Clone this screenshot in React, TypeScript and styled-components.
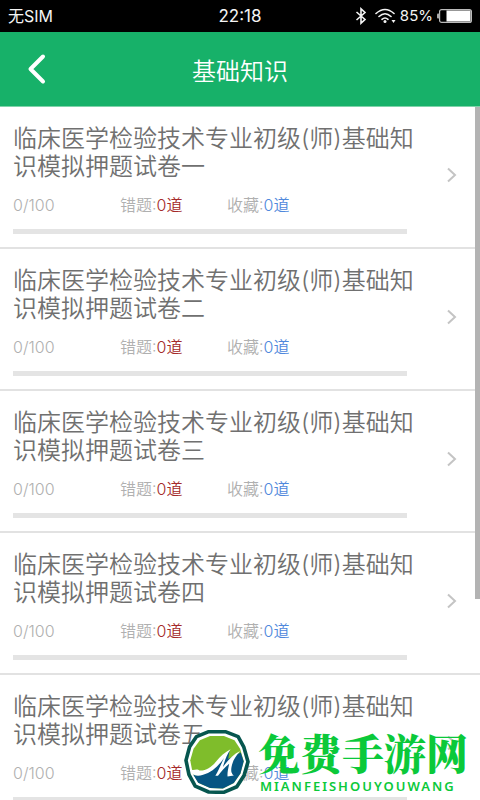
import React from "react";
import styled, { createGlobalStyle } from "styled-components";

const GlobalStyle = createGlobalStyle`
  * { box-sizing: border-box; }
  body {
    margin: 0;
    background: #fff;
    font-family: Inter, "Noto Sans CJK SC", sans-serif;
  }
`;

const Screen = styled.div`
  position: relative;
  display: flex;
  flex-direction: column;
  height: 100vh;
  overflow: hidden;
`;

const StatusBar = styled.div`
  display: grid;
  grid-template-columns: 1fr auto 1fr;
  align-items: center;
  flex: none;
  height: 32px;
  padding: 0 8px;
  background: #000;
  color: #f4f4f4;
  font-size: 16px;
  line-height: 32px;
`;

const Clock = styled.time`
  font-size: 17px;
`;

const StatusIcons = styled.div`
  display: flex;
  align-items: center;
  justify-content: flex-end;
`;

const BatteryLevel = styled.span`
  margin: 0 4px;
  font-size: 15px;
`;

const WifiIcon = styled.svg`
  margin-left: 8px;
`;

const Header = styled.header`
  display: grid;
  grid-template-columns: 74px 1fr 74px;
  align-items: center;
  flex: none;
  height: 75px;
  background: #17b169;
  border-bottom: 1px solid #7fd3aa;
`;

const BackButton = styled.button`
  display: flex;
  justify-content: center;
  padding: 0;
  border: 0;
  background: none;
  cursor: pointer;
`;

const PageTitle = styled.h1`
  margin: 0;
  padding-top: 6px;
  color: #fff;
  font-size: 24px;
  font-weight: 350;
  line-height: 32px;
  text-align: center;
`;

const ListArea = styled.main`
  position: relative;
  flex: 1;
  min-height: 0;
  overflow: hidden;
`;

const PaperList = styled.ul`
  margin: 0;
  padding: 0;
  list-style: none;
`;

const PaperLink = styled.a`
  display: flex;
  align-items: flex-start;
  justify-content: space-between;
  height: 142px;
  padding: 18px 22px 0 13px;
  border-bottom: 2px solid #e2e2e2;
  color: inherit;
  text-decoration: none;
`;

const PaperBody = styled.div`
  flex: 0 1 404px;
  min-width: 0;
`;

const PaperTitle = styled.h2`
  margin: 0;
  color: #707070;
  font-size: 24px;
  font-weight: 350;
  line-height: 28px;
`;

const Stats = styled.div`
  display: grid;
  grid-template-columns: 107px 107px 1fr;
  margin-top: 12px;
  color: #b0b0b0;
  font-size: 16px;
  font-weight: 350;
  line-height: 24px;
`;

const Count = styled.span<{ $color: string }>`
  color: ${(p) => p.$color};
`;

const Progress = styled.div`
  height: 5px;
  margin: 12px 10px 0 0;
  background: #e4e4e4;
`;

const Chevron = styled.svg`
  flex: none;
  margin-top: 42px;
`;

const ScrollThumb = styled.div`
  position: absolute;
  top: 0;
  right: 0;
  width: 5px;
  height: 71%;
  background: #b3b3b3;
`;

const Watermark = styled.div`
  position: absolute;
  right: 12px;
  bottom: 6px;
  display: flex;
  align-items: center;
  gap: 8px;
`;

const Brand = styled.div`
  display: flex;
  flex-direction: column;
  gap: 4px;
`;

const BrandName = styled.strong`
  color: #0bc93a;
  font-family: "Noto Serif CJK SC", "Noto Sans CJK SC", serif;
  font-size: 42px;
  font-weight: 900;
  line-height: 44px;
`;

const BrandLatin = styled.span`
  padding-left: 2px;
  color: #0bc93a;
  font-family: "Noto Sans", sans-serif;
  font-size: 13px;
  font-weight: 600;
  letter-spacing: 2px;
  line-height: 16px;
`;

const papers = ["一", "二", "三", "四", "五"];

function BrandLogo() {
  return (
    <svg width="66" height="64" viewBox="0 10 200 194" aria-hidden="true">
      <path
        d="M75 15 125 15 164 30 181 61 194 106 182 148 160 182 120 199 75 198 34 180 15 145 6 102 17 61 38 30Z"
        fill="#fff"
        stroke="#06564f"
        strokeWidth="11"
        strokeLinejoin="round"
      />
      <path
        d="M79 28 121 28 153 41 170 67 181 105 171 142 151 171 118 187 79 186 43 170 26 140 19 102 29 67 48 41Z"
        fill="#7fbd2b"
      />
      <path
        d="M28 146C52 151 77 137 104 112L138 72 134 98 172 78 181 105 171 142 151 171 118 187 79 186 43 170Z"
        fill="#075582"
      />
      <path
        d="M20 128C28 136 38 124 47 133C66 134 82 124 96 107C110 89 124 77 141 68C130 84 124 101 118 122C132 103 148 85 170 74C156 90 147 105 144 122C142 134 143 142 151 148L132 151C131 141 133 130 137 112C124 122 112 137 103 149L95 149C105 132 112 115 121 95C103 122 82 139 58 146C44 150 34 150 25 142Z"
        fill="#fff"
      />
    </svg>
  );
}

export default function App() {
  return (
    <Screen>
      <GlobalStyle />
      <StatusBar>
        <span>无SIM</span>
        <Clock>22:18</Clock>
        <StatusIcons>
          <svg width="12" height="18" viewBox="0 0 12 18" aria-label="蓝牙">
            <path d="M1.5 5 10 12.5 6 16.2V1.8L10 5.5 1.5 13" fill="none" stroke="#f4f4f4" strokeWidth="1.6" />
          </svg>
          <WifiIcon width="21" height="16" viewBox="0 0 21 16" aria-label="无线网络">
            <g fill="none" stroke="#f4f4f4" strokeWidth="1.6" strokeLinecap="round">
              <path d="M1 5.5Q10 -2.5 19 5.5M4 8.5Q10 3 16 8.5M7 11.3Q10 8.7 13 11.3" />
            </g>
            <circle cx="10" cy="13.5" r="1.5" fill="#f4f4f4" />
            <path d="M16.5 12h4l-2 3z" fill="#f4f4f4" />
          </WifiIcon>
          <BatteryLevel>85%</BatteryLevel>
          <svg width="35" height="14" viewBox="0 0 35 14" aria-label="电池">
            <rect x="2.6" y=".6" width="31.8" height="12.8" rx="2" fill="none" stroke="#bbb" strokeWidth="1.2" />
            <rect x="0" y="4.5" width="2.5" height="5" rx="1" fill="#aaa" />
            <rect x="9.5" y="1.5" width="24" height="11" fill="#fff" />
          </svg>
        </StatusIcons>
      </StatusBar>
      <Header>
        <BackButton aria-label="返回">
          <svg width="20" height="32" viewBox="0 0 20 32">
            <path d="M16 3.5 3.5 16 16 28.5" fill="none" stroke="#fff" strokeWidth="4" strokeLinecap="round" strokeLinejoin="round" />
          </svg>
        </BackButton>
        <PageTitle>基础知识</PageTitle>
      </Header>
      <ListArea>
        <PaperList>
          {papers.map((number) => (
            <li key={number}>
              <PaperLink href="#">
                <PaperBody>
                  <PaperTitle>临床医学检验技术专业初级(师)基础知识模拟押题试卷{number}</PaperTitle>
                  <Stats>
                    <span>0/100</span>
                    <span>错题:<Count $color="#a52a2a">0道</Count></span>
                    <span>收藏:<Count $color="#4f88dc">0道</Count></span>
                  </Stats>
                  <Progress role="progressbar" aria-label="答题进度" aria-valuenow={0} aria-valuemax={100} />
                </PaperBody>
                <Chevron width="12" height="16" viewBox="0 0 12 16" aria-hidden="true">
                  <path d="M2 1.5 9 8 2 14.5" fill="none" stroke="#c4c4c4" strokeWidth="2" />
                </Chevron>
              </PaperLink>
            </li>
          ))}
        </PaperList>
        <ScrollThumb />
      </ListArea>
      <Watermark>
        <BrandLogo />
        <Brand>
          <BrandName>免费手游网</BrandName>
          <BrandLatin>MIANFEISHOUYOUWANG</BrandLatin>
        </Brand>
      </Watermark>
    </Screen>
  );
}
